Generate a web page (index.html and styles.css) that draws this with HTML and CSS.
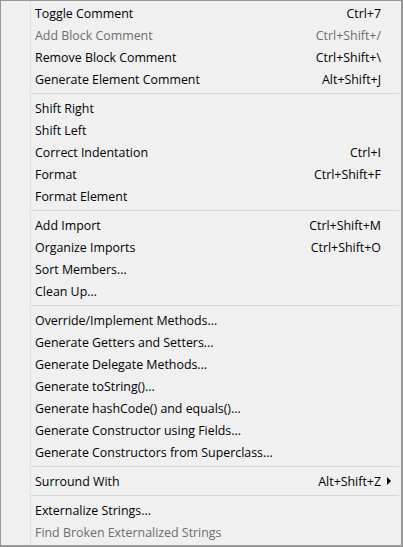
FILE: index.html
```html
<!DOCTYPE html>
<html>
<head>
<meta charset="utf-8">
<link rel="stylesheet" href="styles.css">
</head>
<body>
<div class="menu">
  <div class="group">
    <div class="item"><span class="label">Toggle Comment</span><span class="key">Ctrl+7</span></div>
    <div class="item disabled"><span class="label">Add Block Comment</span><span class="key">Ctrl+Shift+/</span></div>
    <div class="item"><span class="label">Remove Block Comment</span><span class="key">Ctrl+Shift+\</span></div>
    <div class="item"><span class="label">Generate Element Comment</span><span class="key">Alt+Shift+J</span></div>
  </div>
  <div class="sep"></div>
  <div class="group">
    <div class="item"><span class="label">Shift Right</span></div>
    <div class="item"><span class="label">Shift Left</span></div>
    <div class="item"><span class="label">Correct Indentation</span><span class="key">Ctrl+I</span></div>
    <div class="item"><span class="label">Format</span><span class="key">Ctrl+Shift+F</span></div>
    <div class="item"><span class="label">Format Element</span></div>
  </div>
  <div class="sep"></div>
  <div class="group">
    <div class="item"><span class="label">Add Import</span><span class="key">Ctrl+Shift+M</span></div>
    <div class="item"><span class="label">Organize Imports</span><span class="key">Ctrl+Shift+O</span></div>
    <div class="item"><span class="label">Sort Members...</span></div>
    <div class="item"><span class="label">Clean Up...</span></div>
  </div>
  <div class="sep"></div>
  <div class="group">
    <div class="item"><span class="label">Override/Implement Methods...</span></div>
    <div class="item"><span class="label">Generate Getters and Setters...</span></div>
    <div class="item"><span class="label">Generate Delegate Methods...</span></div>
    <div class="item"><span class="label">Generate toString()...</span></div>
    <div class="item"><span class="label">Generate hashCode() and equals()...</span></div>
    <div class="item"><span class="label">Generate Constructor using Fields...</span></div>
    <div class="item"><span class="label">Generate Constructors from Superclass...</span></div>
  </div>
  <div class="sep"></div>
  <div class="group">
    <div class="item"><span class="label">Surround With</span><span class="key">Alt+Shift+Z</span><span class="arrow"></span></div>
  </div>
  <div class="sep"></div>
  <div class="group">
    <div class="item"><span class="label">Externalize Strings...</span></div>
    <div class="item disabled"><span class="label">Find Broken Externalized Strings</span></div>
  </div>
</div>
</body>
</html>
```

FILE: styles.css
```css
html, body {
  margin: 0;
  padding: 0;
  background: #f0f0f0;
}
.menu {
  box-sizing: border-box;
  width: 403px;
  height: 547px;
  border-left: 1px solid #979797;
  border-top: 1px solid #979797;
  border-right: 2px solid #979797;
  border-bottom: 2px solid #979797;
  padding: 1px 2px 0 0;
  background: #f0f0f0 linear-gradient(#e2e2e2, #e2e2e2) no-repeat 29px 0 / 1px 100%;
  font-family: "Open Sans", "Noto Sans", sans-serif;
  font-size: 12.4px;
  color: #000;
}
.group {
  display: flex;
  flex-direction: column;
}
.item {
  display: flex;
  align-items: center;
  height: 22px;
  padding-left: 34px;
  padding-right: 18px;
}
.label {
  flex: 1;
  white-space: nowrap;
}
.key {
  white-space: nowrap;
}
.disabled {
  color: #6d6d6d;
}
.arrow {
  width: 0;
  height: 0;
  border-left: 4px solid #000;
  border-top: 4px solid transparent;
  border-bottom: 4px solid transparent;
  margin-left: 6px;
  margin-right: -10px;
}
.sep {
  height: 7px;
  display: flex;
  align-items: center;
  padding-left: 30px;
}
.sep::before {
  content: "";
  flex: 1;
  height: 1px;
  background: #d7d7d7;
}
```
